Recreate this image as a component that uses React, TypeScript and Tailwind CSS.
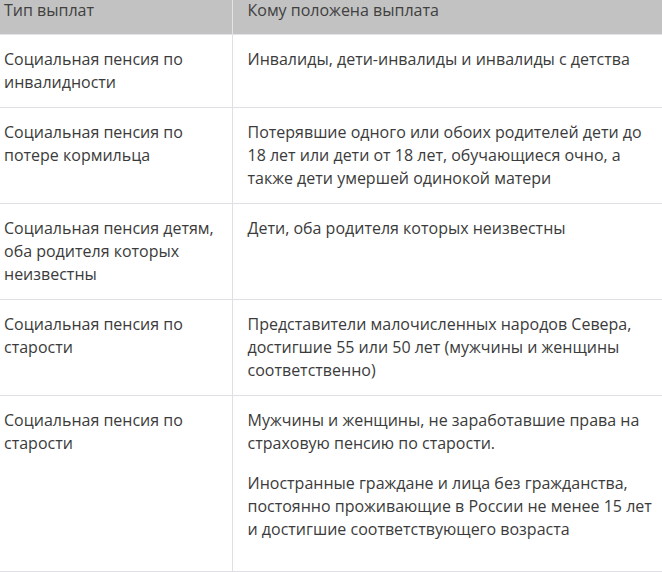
import React from "react";

type Row = { left: string[]; right: string[][] };

const rows: Row[] = [
  {
    left: ["Социальная пенсия по", "инвалидности"],
    right: [["Инвалиды, дети-инвалиды и инвалиды с детства"]],
  },
  {
    left: ["Социальная пенсия по", "потере кормильца"],
    right: [
      [
        "Потерявшие одного или обоих родителей дети до",
        "18 лет или дети от 18 лет, обучающиеся очно, а",
        "также дети умершей одинокой матери",
      ],
    ],
  },
  {
    left: ["Социальная пенсия детям,", "оба родителя которых", "неизвестны"],
    right: [["Дети, оба родителя которых неизвестны"]],
  },
  {
    left: ["Социальная пенсия по", "старости"],
    right: [
      [
        "Представители малочисленных народов Севера,",
        "достигшие 55 или 50 лет (мужчины и женщины",
        "соответственно)",
      ],
    ],
  },
  {
    left: ["Социальная пенсия по", "старости"],
    right: [
      ["Мужчины и женщины, не заработавшие права на", "страховую пенсию по старости."],
      [
        "Иностранные граждане и лица без гражданства,",
        "постоянно проживающие в России не менее 15 лет",
        "и достигшие соответствующего возраста",
      ],
    ],
  },
];

function Lines({ lines }: { lines: string[] }) {
  return (
    <>
      {lines.map((l, i) => (
        <span key={i} className="block whitespace-nowrap">
          {l}
        </span>
      ))}
    </>
  );
}

export default function App() {
  return (
    <div
      className="w-[662px] h-[572px] overflow-hidden bg-white text-[16px] leading-[23px] text-[#3b3b3b]"
      style={{ fontFamily: "'Open Sans', 'Noto Sans', sans-serif" }}
    >
      <table className="w-[662px] border-collapse table-fixed">
        <colgroup>
          <col className="w-[232px]" />
          <col className="w-[430px]" />
        </colgroup>
        <thead>
          <tr className="bg-[#c2c2c2] text-[#404040]">
            <th className="border-b border-r border-[#e2e3e6] pl-[4px] pr-2 pt-0 pb-[14px] text-left font-normal align-top leading-[20px]">
              Тип выплат
            </th>
            <th className="border-b border-[#e2e3e6] pl-[15px] pr-2 pt-0 pb-[14px] text-left font-normal align-top leading-[20px]">
              Кому положена выплата
            </th>
          </tr>
        </thead>
        <tbody>
          {rows.map((r, i) => (
            <tr key={i}>
              <td className="border-b border-r border-[#dfe0e4] pl-[4px] pr-2 py-[13px] align-top">
                <Lines lines={r.left} />
              </td>
              <td className="border-b border-[#dfe0e4] pl-[15px] pr-2 pt-[13px] pb-[13px] align-top">
                {r.right.map((p, j) => (
                  <p key={j} className={r.right.length > 1 ? "mb-[17px]" : ""}>
                    <Lines lines={p} />
                  </p>
                ))}
              </td>
            </tr>
          ))}
        </tbody>
      </table>
    </div>
  );
}
